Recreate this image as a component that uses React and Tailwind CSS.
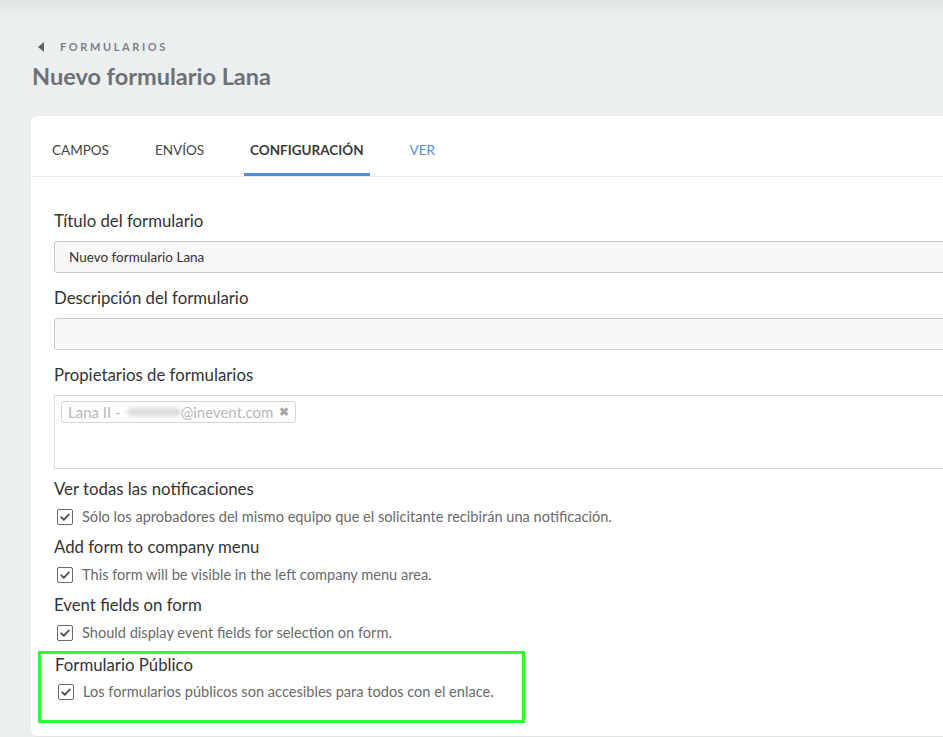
import React from "react";

const tabs = [
  { label: "CAMPOS" },
  { label: "ENVÍOS" },
  { label: "CONFIGURACIÓN", active: true },
  { label: "VER", link: true },
];

const toggles = [
  {
    title: "Ver todas las notificaciones",
    text: "Sólo los aprobadores del mismo equipo que el solicitante recibirán una notificación.",
  },
  {
    title: "Add form to company menu",
    text: "This form will be visible in the left company menu area.",
  },
  {
    title: "Event fields on form",
    text: "Should display event fields for selection on form.",
  },
];

function Checkbox() {
  return (
    <span className="ml-[3px] flex h-[16px] w-[16px] shrink-0 items-center justify-center rounded-[2px] border-[1.5px] border-[#6a6a6a] bg-white">
      <svg viewBox="0 0 12 12" className="h-[12px] w-[12px]">
        <path d="M2.2 6.2 L4.8 8.8 L9.8 3.4" fill="none" stroke="#505050" strokeWidth="1.8" strokeLinecap="round" strokeLinejoin="round" />
      </svg>
    </span>
  );
}

function CheckRow({ text }) {
  return (
    <div className="flex h-[20px] items-center gap-[9px]">
      <Checkbox />
      <span className="text-[14.6px] text-[#6a6a6a]">{text}</span>
    </div>
  );
}

function Label({ children, className = "" }) {
  return (
    <div className={`text-[16.8px] leading-[22px] text-[#333] ${className}`}>{children}</div>
  );
}

export default function App() {
  return (
    <div className="min-h-[737px] overflow-hidden bg-[#ebeff0] bg-[linear-gradient(to_bottom,#dfe3e4,#ebeff0_16px)] pt-[38px] font-['Lato',sans-serif]">
      {/* breadcrumb */}
      <div className="flex h-[18px] items-center pl-[38px]">
        <svg viewBox="0 0 6 10" className="h-[10px] w-[6px]">
          <path d="M6 0 L0 5 L6 10 Z" fill="#5f6367" />
        </svg>
        <span className="ml-[16px] text-[11px] font-bold tracking-[2.6px] text-[#7d8185]">
          FORMULARIOS
        </span>
      </div>
      <h1 className="mt-[5px] pl-[32px] text-[23.5px] font-bold leading-[30px] text-[#6d7175]">
        Nuevo formulario Lana
      </h1>

      {/* card */}
      <div className="ml-[31px] mt-[25px] w-[1000px] rounded-md bg-white pb-[13px] shadow-[0_1px_2px_rgba(0,0,0,0.06)]">
        <div className="flex h-[61px] gap-[34px] border-b border-[#ececec] pl-[15px]">
          {tabs.map((t) => (
            <div
              key={t.label}
              className={`flex items-start px-[6px] pt-[25px] text-[13.5px] leading-[18px] ${
                t.active
                  ? "border-b-[3px] border-[#4a8fd8] font-bold text-[#3a3a3a]"
                  : t.link
                  ? "text-[#5b8ad3]"
                  : "text-[#444]"
              }`}
            >
              {t.label}
            </div>
          ))}
        </div>

        <div className="px-[23px]">
          <Label className="mt-[33px]">Título del formulario</Label>
          <div className="mt-[9px] flex h-[32px] items-center rounded-[3px] border border-[#c9c9c9] bg-[#f8f8f8] pl-[14px] text-[13.5px] text-[#333]">
            Nuevo formulario Lana
          </div>

          <Label className="mt-[14px]">Descripción del formulario</Label>
          <div className="mt-[9px] h-[32px] rounded-[3px] border border-[#c9c9c9] bg-[#f8f8f8]" />

          <Label className="mt-[14px]">Propietarios de formularios</Label>
          <div className="mt-[9px] h-[74px] border border-[#dcdcdc] bg-white px-[6px] pt-[4px]">
            <span className="inline-flex h-[22px] items-center rounded-[3px] border border-[#d4d4d4] pl-[6px] pr-[6px] text-[15px] text-[#b8b8b8]">
              Lana II -
              <span className="ml-[6px] inline-block h-[8px] w-[54px] rounded-full bg-[#dadada] blur-[2px]" />
              @inevent.com
              <span className="ml-[6px] text-[12px] font-bold text-[#a9a9a9]">✖</span>
            </span>
          </div>

          {toggles.map((t) => (
            <div key={t.title} className="mt-[9px]">
              <Label>{t.title}</Label>
              <div className="mt-[7px]">
                <CheckRow text={t.text} />
              </div>
            </div>
          ))}

          <div className="-ml-[16px] mt-[8px] w-[487px] border-[3px] border-[#2bff2b] pb-[18px] pl-[14px]">
            <Label>Formulario Público</Label>
            <div className="mt-[6px]">
              <CheckRow text="Los formularios públicos son accesibles para todos con el enlace." />
            </div>
          </div>
        </div>
      </div>
    </div>
  );
}
